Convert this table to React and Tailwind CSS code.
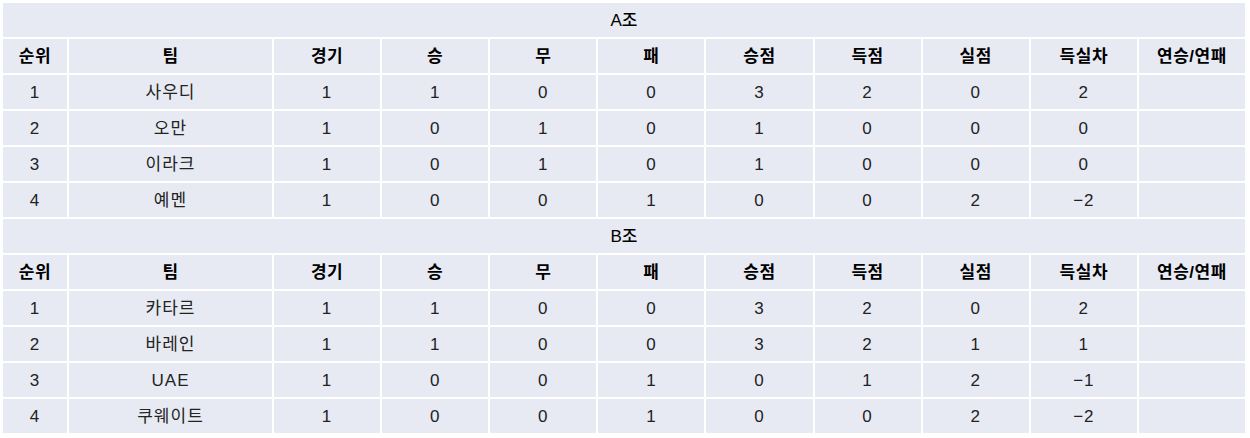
import React from "react";

const headers = ["순위", "팀", "경기", "승", "무", "패", "승점", "득점", "실점", "득실차", "연승/연패"];

const groups = [
  {
    name: "A조",
    rows: [
      ["1", "사우디", "1", "1", "0", "0", "3", "2", "0", "2", ""],
      ["2", "오만", "1", "0", "1", "0", "1", "0", "0", "0", ""],
      ["3", "이라크", "1", "0", "1", "0", "1", "0", "0", "0", ""],
      ["4", "예멘", "1", "0", "0", "1", "0", "0", "2", "−2", ""],
    ],
  },
  {
    name: "B조",
    rows: [
      ["1", "카타르", "1", "1", "0", "0", "3", "2", "0", "2", ""],
      ["2", "바레인", "1", "1", "0", "0", "3", "2", "1", "1", ""],
      ["3", "UAE", "1", "0", "0", "1", "0", "1", "2", "−1", ""],
      ["4", "쿠웨이트", "1", "0", "0", "1", "0", "0", "2", "−2", ""],
    ],
  },
];

export default function App() {
  return (
    <div
      className="bg-white w-[1250px] h-[438px] pl-[1px] pt-[1px]"
      style={{ fontFamily: '"Liberation Sans", "Noto Sans CJK KR", sans-serif' }}
    >
      <table className="w-[1246px] table-fixed border-separate border-spacing-[2px] text-[17px] leading-none">
        <colgroup>
          <col className="w-[64px]" />
          <col className="w-[203px]" />
          <col />
          <col />
          <col />
          <col />
          <col />
          <col />
          <col />
          <col />
          <col />
        </colgroup>
        <tbody>
          {groups.map((g) => (
            <React.Fragment key={g.name}>
              <tr className="h-[34px]">
                <td colSpan={11} className="bg-[#e8eaf3] text-center text-black p-0 font-medium">
                  {g.name}
                </td>
              </tr>
              <tr className="h-[34px]">
                {headers.map((h) => (
                  <td key={h} className="bg-[#e8eaf3] text-center text-black font-bold p-0 tracking-[0.5px]">
                    {h}
                  </td>
                ))}
              </tr>
              {g.rows.map((r, i) => (
                <tr key={i} className="h-[34px]">
                  {r.map((c, j) => (
                    <td key={j} className="bg-[#e8eaf3] text-center text-[#222] p-0 tracking-[1px]">
                      {c}
                    </td>
                  ))}
                </tr>
              ))}
            </React.Fragment>
          ))}
        </tbody>
      </table>
    </div>
  );
}
